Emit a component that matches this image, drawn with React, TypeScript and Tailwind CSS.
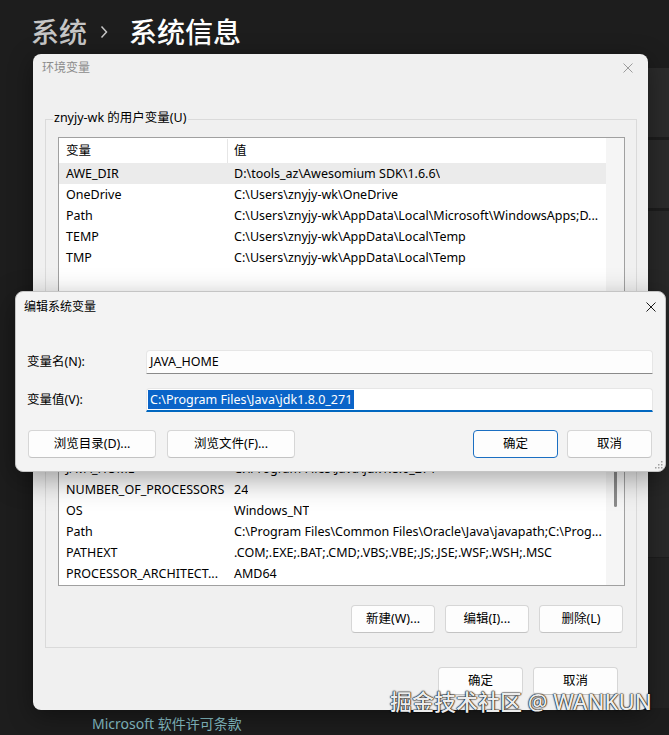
import clsx from "clsx";
import type { ReactNode } from "react";

type Row = [string, string];

const userVars: Row[] = [
  ["AWE_DIR", "D:\\tools_az\\Awesomium SDK\\1.6.6\\"],
  ["OneDrive", "C:\\Users\\znyjy-wk\\OneDrive"],
  ["Path", "C:\\Users\\znyjy-wk\\AppData\\Local\\Microsoft\\WindowsApps;D..."],
  ["TEMP", "C:\\Users\\znyjy-wk\\AppData\\Local\\Temp"],
  ["TMP", "C:\\Users\\znyjy-wk\\AppData\\Local\\Temp"],
];

// list is scrolled: only the tail shows below the edit dialog
const systemVars: Row[] = [
  ["JAVA_HOME", "C:\\Program Files\\Java\\jdk1.8.0_271"],
  ["NUMBER_OF_PROCESSORS", "24"],
  ["OS", "Windows_NT"],
  ["Path", "C:\\Program Files\\Common Files\\Oracle\\Java\\javapath;C:\\Prog..."],
  ["PATHEXT", ".COM;.EXE;.BAT;.CMD;.VBS;.VBE;.JS;.JSE;.WSF;.WSH;.MSC"],
  ["PROCESSOR_ARCHITECT...", "AMD64"],
];

const CloseIcon = ({ className }: { className?: string }) => (
  <svg width="10" height="10" viewBox="0 0 10 10" className={className}>
    <path d="M0.5 0.5L9.5 9.5M9.5 0.5L0.5 9.5" stroke="currentColor" strokeWidth="1" fill="none" />
  </svg>
);

const WinButton = ({
  children,
  primary,
  className,
}: {
  children: ReactNode;
  primary?: boolean;
  className?: string;
}) => (
  <button
    className={clsx(
      "flex h-[28px] items-center justify-center rounded-[4px] border bg-[#fdfdfd] text-[12.5px] text-black",
      primary ? "border-[#1b6fc2]" : "border-[#d6d6d6] border-b-[#c3c3c3]",
      className
    )}
  >
    {children}
  </button>
);

const VarTable = ({
  rows,
  className,
  selected,
  bottomAligned,
  thumb,
  labels = true,
}: {
  rows: Row[];
  className: string;
  selected?: number;
  bottomAligned?: boolean;
  thumb?: boolean;
  labels?: boolean;
}) => (
  <div className={clsx("flex border border-[#a0a0a0] bg-white", className)}>
    <div className="flex min-w-0 flex-1 flex-col">
      {/* column headers */}
      <div className="flex h-[25px] shrink-0 items-center pt-[1px]">
        <div className="flex h-full w-[169px] shrink-0 items-center border-r border-[#e6e6e6] pl-[7px]">
          {labels && "变量"}
        </div>
        <div className="pl-[6px]">{labels && "值"}</div>
      </div>
      <div
        className={clsx(
          "flex flex-1 flex-col overflow-hidden",
          bottomAligned && "justify-end pb-[1px]"
        )}
      >
        {rows.map(([name, value], i) => (
          <div
            key={name + i}
            className={clsx(
              "flex h-[21px] shrink-0 items-center whitespace-nowrap pt-[2px]",
              i === selected && "bg-[#ebebeb]"
            )}
          >
            <div className="w-[169px] shrink-0 overflow-hidden pl-[7px]">{name}</div>
            <div className="overflow-hidden pl-[6px]">{value}</div>
          </div>
        ))}
      </div>
    </div>
    {/* scrollbar track */}
    <div className="w-[18px] shrink-0 bg-[#f5f5f5]">
      {thumb && <div className="mx-auto mt-[50px] h-[89px] w-[3px] rounded-full bg-[#8a8a8a]" />}
    </div>
  </div>
);

const GroupBox = ({
  label,
  className,
  children,
}: {
  label?: string;
  className: string;
  children: ReactNode;
}) => (
  <div className={clsx("relative border border-[#dadada]", className)}>
    {label && (
      <span className="absolute -top-[10px] left-[7px] bg-[#f0f0f0] px-[1px] leading-[16px]">
        {label}
      </span>
    )}
    {children}
  </div>
);

export default function App() {
  return (
    <div className="relative h-[735px] w-[669px] overflow-hidden bg-[#1d1d1d] font-['Noto_Sans','Noto_Sans_CJK_SC',sans-serif]">
      {/* settings page underneath */}
      <div className="flex items-center pl-[31px] pt-[18px] text-[28px] font-medium leading-[28px]">
        <span className="text-[#c6c6c6]">系统</span>
        <svg width="8" height="14" viewBox="0 0 8 14" className="ml-[13px] mr-[21px] text-[#c6c6c6]">
          <path d="M1.5 1.5L6.5 7L1.5 12.5" stroke="currentColor" strokeWidth="1.5" fill="none" />
        </svg>
        <span className="text-white">系统信息</span>
      </div>
      <div className="ml-[36px] mt-[22px] flex flex-col">
        <div className="h-[69px] rounded-l-md bg-[#2b2b2b]" />
        <div className="mt-[3px] h-[68px] rounded-l-md bg-[#2b2b2b]" />
        <div className="mt-[3px] h-[346px] rounded-l-md bg-[#292929]" />
        <div className="mt-[1px] h-[150px] rounded-l-md bg-[#232323]" />
      </div>
      <div className="mt-[8px] pl-[92px] text-[14px] leading-[16px] text-[#86bfc6]">
        Microsoft 软件许可条款
      </div>

      {/* 环境变量 window */}
      <div className="absolute left-[33px] top-[54px] flex h-[656px] w-[615px] flex-col rounded-lg bg-[#f0f0f0] text-[12.5px] text-black shadow-[0_6px_24px_rgba(0,0,0,0.4)]">
        <div className="flex h-[28px] shrink-0 items-center justify-between pl-[9px] pr-[15px] text-[#8c8c8c]">
          <span className="text-[12px]">环境变量</span>
          <CloseIcon className="text-[#9c9c9c]" />
        </div>

        <GroupBox label="znyjy-wk 的用户变量(U)" className="ml-[12px] mr-[11px] mt-[37px] h-[212px] shrink-0 pl-[12px] pr-[11px] pt-[17px]">
          <VarTable rows={userVars} className="h-[178px]" selected={0} />
        </GroupBox>

        <GroupBox className="ml-[12px] mr-[11px] mt-[18px] h-[299px] shrink-0 pl-[12px] pr-[11px] pt-[17px]">
          <VarTable rows={systemVars} className="h-[219px]" bottomAligned thumb labels={false} />
          <div className="mt-[19px] flex justify-end gap-[10px] pr-[2px]">
            <WinButton className="w-[84px]">新建(W)...</WinButton>
            <WinButton className="w-[84px]">编辑(I)...</WinButton>
            <WinButton className="w-[84px]">删除(L)</WinButton>
          </div>
        </GroupBox>

        <div className="mt-[19px] flex justify-end gap-[10px] pr-[30px]">
          <WinButton className="w-[85px]">确定</WinButton>
          <WinButton className="w-[85px]">取消</WinButton>
        </div>
      </div>

      {/* 编辑系统变量 dialog */}
      <div className="absolute left-[15px] top-[291px] flex h-[181px] w-[651px] flex-col rounded-lg border border-[#c4c4c4] bg-[#f3f3f3] text-[12.5px] text-black shadow-[0_8px_28px_rgba(0,0,0,0.35)]">
        <div className="flex h-[29px] shrink-0 items-center justify-between pl-[8px] pr-[9px] pt-[1px]">
          <span className="text-[12px]">编辑系统变量</span>
          <CloseIcon className="text-[#1a1a1a]" />
        </div>
        <div className="mt-[29px] flex items-center pl-[11px]">
          <div className="w-[119px] shrink-0">变量名(N):</div>
          <div className="flex h-[24px] w-[507px] items-center rounded-t-[4px] border border-[#e6e6e6] border-b-[#8a8a8a] bg-[#fdfdfd] pl-[3px]">
            JAVA_HOME
          </div>
        </div>
        <div className="mt-[14px] flex items-center pl-[11px]">
          <div className="w-[119px] shrink-0">变量值(V):</div>
          <div className="flex h-[24px] w-[507px] items-center rounded-t-[4px] border border-[#e6e6e6] border-b-2 border-b-[#0067c0] bg-white pl-[1px]">
            <span className="bg-[#0a64c8] px-[2px] leading-[19px] text-white">
              C:\Program Files\Java\jdk1.8.0_271
            </span>
          </div>
        </div>
        <div className="mt-[18px] flex items-center pl-[12px] pr-[13px]">
          <WinButton className="w-[128px]">浏览目录(D)...</WinButton>
          <WinButton className="ml-[11px] w-[128px]">浏览文件(F)...</WinButton>
          <WinButton primary className="ml-auto w-[85px]">确定</WinButton>
          <WinButton className="ml-[9px] w-[85px]">取消</WinButton>
        </div>
        {/* size grip */}
        <svg width="8" height="8" viewBox="0 0 8 8" className="absolute bottom-[2px] right-[2px] text-[#a0a0a0]">
          <rect x="6" y="0" width="1.5" height="1.5" fill="currentColor" />
          <rect x="3" y="3" width="1.5" height="1.5" fill="currentColor" />
          <rect x="6" y="3" width="1.5" height="1.5" fill="currentColor" />
          <rect x="0" y="6" width="1.5" height="1.5" fill="currentColor" />
          <rect x="3" y="6" width="1.5" height="1.5" fill="currentColor" />
          <rect x="6" y="6" width="1.5" height="1.5" fill="currentColor" />
        </svg>
      </div>

      {/* watermark */}
      <div className="absolute left-[390px] top-[688px] whitespace-nowrap text-[22px] font-medium leading-[26px] text-[#ececec] [text-shadow:0_0_1px_#000,0_0_1px_#000,0_0_2px_#000]">
        掘金技术社区 @ WANKUN
      </div>
    </div>
  );
}
